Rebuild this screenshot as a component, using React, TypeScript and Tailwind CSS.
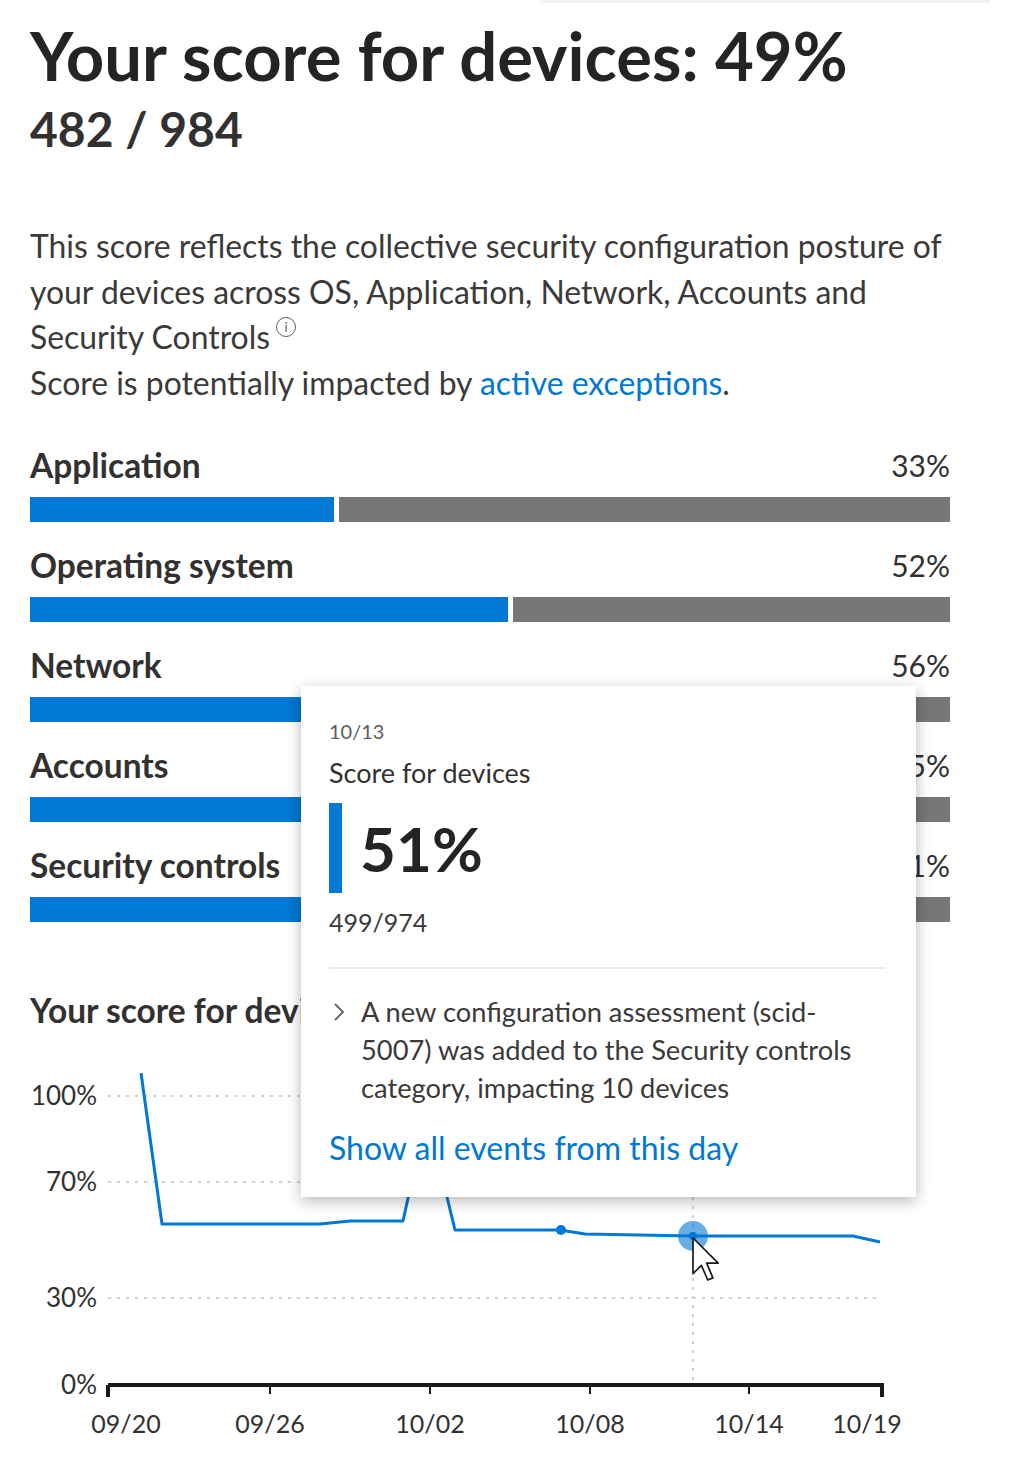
import React from "react";

const categories = [
  { name: "Application", pct: 33 },
  { name: "Operating system", pct: 52 },
  { name: "Network", pct: 56 },
  { name: "Accounts", pct: 45 },
  { name: "Security controls", pct: 41 },
];

const yTicks = [
  { label: "100%", y: 56 },
  { label: "70%", y: 142 },
  { label: "30%", y: 258 },
  { label: "0%", y: 345 },
];

const xTicks = [
  { label: "09/20", x: 108, lx: 126 },
  { label: "09/26", x: 270, lx: 270 },
  { label: "10/02", x: 430, lx: 430 },
  { label: "10/08", x: 590, lx: 590 },
  { label: "10/14", x: 749, lx: 749 },
  { label: "10/19", x: 882, lx: 867 },
];

const linePoints =
  "141,33 162,184 320,184 350,181 403,181 412,140 425,60 440,140 447,157 455,190 560,190 585,194 693,196 853,196 880,202";

function CategoryBar({ name, pct }: { name: string; pct: number }) {
  return (
    <div className="flex flex-col">
      <div className="flex items-center justify-between h-[40px]">
        <span className="text-[33.5px] font-bold text-[#323130]">{name}</span>
        <span className="text-[30px] text-[#323130]">{pct}%</span>
      </div>
      <div className="flex gap-[5px] h-[25px] mt-[12px]">
        <div className="bg-[#0078d4] h-full" style={{ width: `${pct}%` }} />
        <div className="bg-[#797775] h-full flex-1" />
      </div>
    </div>
  );
}

function ScoreChart() {
  return (
    <svg width="1012" height="420" viewBox="0 0 1012 420" className="block -ml-[30px] mt-[10px]">
      {yTicks.map((t) => (
        <g key={t.label}>
          <text
            x="97"
            y={t.y + 9}
            textAnchor="end"
            fontSize="26"
            fill="#323130"
            fontFamily="Lato, sans-serif"
          >
            {t.label}
          </text>
          {t.label !== "0%" && (
            <line x1="108" x2="880" y1={t.y} y2={t.y} stroke="#d2d0ce" strokeWidth="2" strokeDasharray="3 6" />
          )}
        </g>
      ))}
      <line x1="693" x2="693" y1="157" y2="344" stroke="#d2d0ce" strokeWidth="2" strokeDasharray="3 6" />
      <polyline points={linePoints} fill="none" stroke="#0078d4" strokeWidth="3" strokeLinejoin="round" />
      <circle cx="561" cy="190" r="5" fill="#0078d4" />
      <circle cx="693" cy="196" r="15" fill="#0078d4" fillOpacity="0.6" />
      <circle cx="693" cy="196" r="4" fill="#0078d4" />
      <line x1="108" x2="884" y1="345" y2="345" stroke="#1b1a19" strokeWidth="4" />
      {xTicks.map((t, i) => (
        <g key={t.label}>
          <line
            x1={t.x}
            x2={t.x}
            y1="345"
            y2={i === 0 || i === xTicks.length - 1 ? 357 : 354}
            stroke="#1b1a19"
            strokeWidth={i === 0 || i === xTicks.length - 1 ? 4 : 2}
          />
          <text x={t.lx} y="393" textAnchor="middle" fontSize="25" fill="#323130" fontFamily="Lato, sans-serif">
            {t.label}
          </text>
        </g>
      ))}
      {/* mouse pointer */}
      <path
        d="M0 0 L0 17 L4 13 L7 20 L9.5 19 L6.5 12 L12 12 Z"
        transform="translate(693 198) scale(2.1)"
        fill="#ffffff"
        stroke="#1b1a19"
        strokeWidth="0.8"
        strokeLinejoin="round"
      />
    </svg>
  );
}

function Tooltip() {
  return (
    <div className="absolute left-[301px] top-[686px] w-[615px] h-[511px] bg-white shadow-[0_4px_14px_rgba(0,0,0,0.28)] px-[28px] pt-[30px]">
      <div className="text-[20px] leading-[30px] text-[#605e5c]">10/13</div>
      <div className="text-[27px] leading-[34px] mt-[10px] text-[#323130]">Score for devices</div>
      <div className="flex items-center gap-[18px] mt-[13px]">
        <div className="w-[13px] h-[90px] bg-[#0078d4]" />
        <span className="text-[62px] font-bold leading-none text-[#252423]">51%</span>
      </div>
      <div className="text-[25px] leading-[34px] mt-[12px] text-[#3b3a39]">499/974</div>
      <div className="h-[2px] bg-[#edebe9] mt-[28px] mr-[2px]" />
      <div className="flex mt-[24px]">
        <svg width="32" height="38" viewBox="0 0 32 38" className="shrink-0">
          <path d="M6 11 L14 19 L6 27" fill="none" stroke="#605e5c" strokeWidth="1.8" />
        </svg>
        <p className="text-[27.3px] leading-[38px] text-[#3b3a39] whitespace-nowrap">
          A new configuration assessment (scid-
          <br />
          5007) was added to the Security controls
          <br />
          category, impacting 10 devices
        </p>
      </div>
      <div className="text-[32px] leading-[40px] mt-[21px] text-[#0078d4] whitespace-nowrap">
        Show all events from this day
      </div>
    </div>
  );
}

export default function App() {
  return (
    <div className="relative w-[1012px] h-[1470px] bg-white overflow-hidden font-['Lato',sans-serif]">
      <div className="absolute top-0 left-[540px] w-[450px] h-[3px] bg-[#f3f2f1]" />
      <div className="px-[30px] pt-[22px]">
        <h1 className="text-[67px] font-bold leading-[66px] text-[#252423] whitespace-nowrap">
          Your score for devices: 49%
        </h1>
        <div className="text-[48px] font-bold leading-[50px] mt-[16px] text-[#323130]">482 / 984</div>

        <div className="mt-[70px] text-[31.9px] leading-[45.5px] text-[#3b3a39] whitespace-nowrap">
          <p>
            This score reflects the collective security configuration posture of
            <br />
            your devices across OS, Application, Network, Accounts and
            <br />
            Security Controls
            <span className="inline-flex align-top mt-[2px] ml-[6px] w-[20px] h-[20px] rounded-full border border-[#605e5c] items-center justify-center text-[13px] leading-none text-[#605e5c]">
              i
            </span>
          </p>
          <p>
            Score is potentially impacted by <span className="text-[#0078d4]">active exceptions</span>.
          </p>
        </div>

        <div className="mt-[39px] flex flex-col gap-[23px] w-[920px]">
          {categories.map((c) => (
            <CategoryBar key={c.name} name={c.name} pct={c.pct} />
          ))}
        </div>

        <div className="mt-[68px] text-[33.5px] font-bold leading-[40px] text-[#323130] whitespace-nowrap">
          Your score for devices over time
        </div>
        <ScoreChart />
      </div>
      <Tooltip />
    </div>
  );
}
